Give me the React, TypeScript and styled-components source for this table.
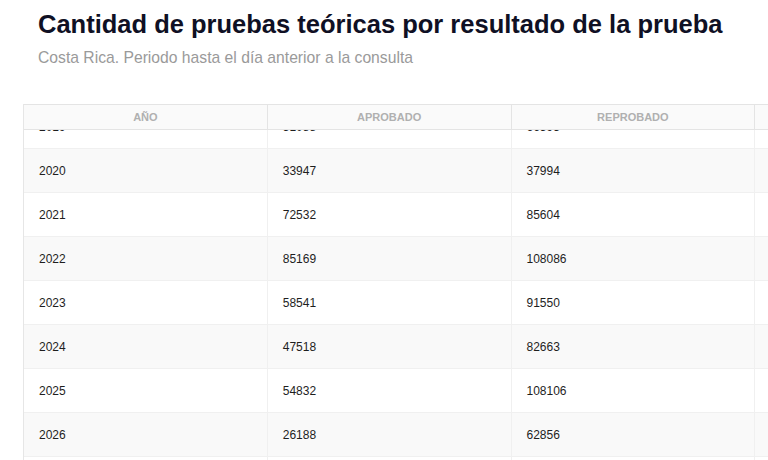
import { useEffect, useRef } from "react";
import styled, { createGlobalStyle } from "styled-components";

type Row = { year: number; aprobado: number; reprobado: number };

const rows: Row[] = [
  { year: 2016, aprobado: 41210, reprobado: 52388 },
  { year: 2017, aprobado: 45872, reprobado: 58104 },
  { year: 2018, aprobado: 49233, reprobado: 61457 },
  { year: 2019, aprobado: 51088, reprobado: 66593 },
  { year: 2020, aprobado: 33947, reprobado: 37994 },
  { year: 2021, aprobado: 72532, reprobado: 85604 },
  { year: 2022, aprobado: 85169, reprobado: 108086 },
  { year: 2023, aprobado: 58541, reprobado: 91550 },
  { year: 2024, aprobado: 47518, reprobado: 82663 },
  { year: 2025, aprobado: 54832, reprobado: 108106 },
  { year: 2026, aprobado: 26188, reprobado: 62856 },
];

const columns = ["Año", "Aprobado", "Reprobado", "Total"];

const sum = (key: "aprobado" | "reprobado") =>
  rows.reduce((acc, r) => acc + r[key], 0);

export default function App() {
  const scrollRef = useRef<HTMLDivElement>(null);
  const anchorRef = useRef<HTMLTableRowElement>(null);

  useEffect(() => {
    // scroll so that 2020 sits just under the sticky header, like the capture
    if (scrollRef.current && anchorRef.current) {
      scrollRef.current.scrollTop = anchorRef.current.offsetTop - 45;
    }
  }, []);

  return (
    <>
      <Global />
      <Page>
        <Header>
          <Title>Cantidad de pruebas teóricas por resultado de la prueba</Title>
          <Subtitle>Costa Rica. Periodo hasta el día anterior a la consulta</Subtitle>
        </Header>
        <Scroller ref={scrollRef}>
          <Table>
            <thead>
              <tr>
                {columns.map((c) => (
                  <Th key={c}>{c}</Th>
                ))}
              </tr>
            </thead>
            <tbody>
              {rows.map((r, i) => (
                <Tr
                  key={r.year}
                  $striped={i % 2 === 0}
                  ref={r.year === 2020 ? anchorRef : undefined}
                >
                  <Td>{r.year}</Td>
                  <Td>{r.aprobado}</Td>
                  <Td>{r.reprobado}</Td>
                  <Td>{r.aprobado + r.reprobado}</Td>
                </Tr>
              ))}
              <Tr $striped={false}>
                <Td>Total</Td>
                <Td>{sum("aprobado")}</Td>
                <Td>{sum("reprobado")}</Td>
                <Td>{sum("aprobado") + sum("reprobado")}</Td>
              </Tr>
            </tbody>
          </Table>
        </Scroller>
      </Page>
    </>
  );
}

const Global = createGlobalStyle`
  html, body {
    margin: 0;
    background: #ffffff;
    overflow: hidden;
  }
  body {
    font-family: "Liberation Sans", Arial, sans-serif;
  }
`;

const Page = styled.div`
  display: flex;
  flex-direction: column;
  padding-left: 23px;
  height: 460px;
`;

const Header = styled.div`
  display: flex;
  flex-direction: column;
  padding: 7px 15px 0;
  height: 98px;
  box-sizing: border-box;
`;

const Title = styled.h1`
  margin: 0;
  font-size: 25.5px;
  line-height: 34px;
  font-weight: 700;
  color: #0f1024;
  white-space: nowrap;
`;

const Subtitle = styled.p`
  margin: 8px 0 0;
  font-size: 15.7px;
  line-height: 18px;
  color: #9a9a9a;
  white-space: nowrap;
`;

const Scroller = styled.div`
  margin-top: 6px;
  flex: 1;
  min-height: 0;
  overflow: hidden;
  width: 1000px;
`;

const Table = styled.table`
  table-layout: fixed;
  width: 976px;
  border-collapse: separate;
  border-spacing: 0;
  border-left: 1px solid #e6e6e6;
`;

const Th = styled.th`
  position: sticky;
  top: 0;
  z-index: 1;
  height: 24px;
  padding: 0;
  background: #fafafa;
  border-top: 1px solid #e4e4e4;
  border-bottom: 1px solid #e4e4e4;
  border-right: 1px solid #e4e4e4;
  font-size: 11px;
  font-weight: 700;
  color: #b0b0b0;
  text-transform: uppercase;
  text-align: center;
`;

const Tr = styled.tr<{ $striped: boolean }>`
  background: ${({ $striped }) => ($striped ? "#f9f9f9" : "#ffffff")};
`;

const Td = styled.td`
  height: 43px;
  padding: 0 15px;
  border-bottom: 1px solid #f0f0f0;
  border-right: 1px solid #f0f0f0;
  font-size: 12px;
  color: #1e1e1e;
  text-align: left;
`;
